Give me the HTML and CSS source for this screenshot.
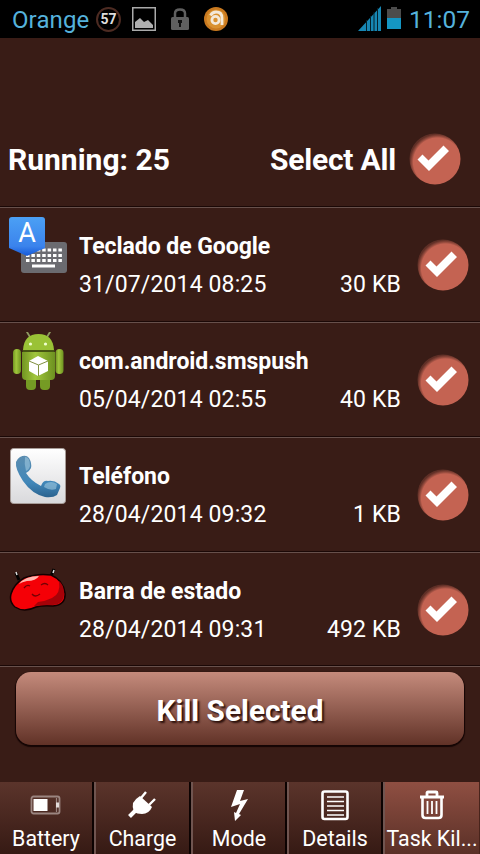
FILE: index.html
```html
<!DOCTYPE html>
<html lang="es">
<head>
    <meta charset="UTF-8">
    <meta name="viewport" content="width=device-width, initial-scale=1.0">
    <title>Task Killer</title>
    <link rel="stylesheet" href="styles.css">
</head>
<body>
    <svg width="0" height="0" class="defs">
        <defs>
            <radialGradient id="disc" cx="0.55" cy="0.56" r="0.55">
                <stop offset="0.86" stop-color="#c46352"/>
                <stop offset="1" stop-color="#a65243" stop-opacity="0.35"/>
            </radialGradient>
            <symbol id="check" viewBox="0 0 52 52">
                <circle cx="26" cy="26" r="25.5" fill="url(#disc)"/>
                <path d="M8.500 26.500l5-5 6 6L34.500 12.500l5.500 5.500L20 38z" fill="#fff"/>
            </symbol>
        </defs>
    </svg>

    <div class="status">
        <span class="carrier">Orange</span>
        <span class="badge">57</span>
        <svg class="picture" width="24" height="24" viewBox="0 0 24 24">
            <rect x="0.750" y="0.750" width="22.500" height="22.500" fill="none" stroke="#aaa" stroke-width="1.500"/>
            <path d="M3 21v-6l5-4 4 4 4-2 5 5v3z" fill="#b0b0b0"/>
        </svg>
        <svg class="lock" width="18" height="23" viewBox="0 0 18 23">
            <path d="M4 12V5.500Q4 1.500 9 1.500t5 4V12" fill="none" stroke="#606060" stroke-width="2.500"/>
            <rect x="0" y="9" width="18" height="13" rx="1.500" fill="#606060"/>
            <path d="M7 12h4v3h-1v4H8v-4H7z" fill="#111"/>
        </svg>
        <svg class="avast" width="24" height="24" viewBox="0 0 24 24">
            <circle cx="12" cy="12" r="12" fill="#c9791f"/>
            <circle cx="12" cy="12" r="9.500" fill="#d99130"/>
            <path d="M6.500 8.500q2-3.500 5.500-3.500 6 0 6 6v7" fill="none" stroke="#f3e9da" stroke-width="2.800"/>
            <circle cx="11.500" cy="13" r="3.600" fill="none" stroke="#f3e9da" stroke-width="2.800"/>
        </svg>
        <svg class="signal" width="23" height="25" viewBox="0 0 23 25">
            <path d="M0 25L23 0v25z" fill="#1787b4"/>
            <path d="M8.500 14v11M12.500 10v15M16 6v19M19.500 2v23" stroke="#05202b" stroke-width="1"/>
        </svg>
        <svg class="cell" width="14" height="22" viewBox="0 0 14 22">
            <path d="M0 2h4V0h6v2h4v9H0z" fill="#4c4c4c"/>
            <path d="M0 11h14v11H0z" fill="#1496c4"/>
        </svg>
        <span class="clock">11:07</span>
    </div>

    <div class="header">
        <span class="running">Running: 25</span>
        <span class="select-all">Select All</span>
        <svg class="check"><use href="#check"/></svg>
    </div>

    <div class="list">
        <div class="row">
            <svg class="app" viewBox="0 0 58 58">
                <defs>
                    <linearGradient id="blue" x2="0" y2="1">
                        <stop offset="0" stop-color="#4ba0f5"/>
                        <stop offset="0.75" stop-color="#3b83ec"/>
                        <stop offset="1" stop-color="#1558d8"/>
                    </linearGradient>
                </defs>
                <rect x="12" y="25" width="46" height="31" rx="3" fill="#6b6b70"/>
                <path d="M17 33h37M17 38.500h37M17 43.500h37" stroke="#fff" stroke-width="3.200" stroke-dasharray="3.500 1.900"/>
                <path d="M23 49h23" stroke="#fff" stroke-width="3"/>
                <path d="M0 3q0-3 3-3h30q3 0 3 3v28L18 39 0 31z" fill="url(#blue)"/>
                <text x="18" y="25" text-anchor="middle" class="letter">A</text>
            </svg>
            <div class="info">
                <div class="name">Teclado de Google</div>
                <div class="meta"><span>31/07/2014 08:25</span><span>30 KB</span></div>
            </div>
            <svg class="check"><use href="#check"/></svg>
        </div>
        <div class="row">
            <svg class="app" viewBox="0 0 58 58">
                <defs>
                    <linearGradient id="green">
                        <stop offset="0" stop-color="#719522"/>
                        <stop offset="0.4" stop-color="#a1c63c"/>
                        <stop offset="1" stop-color="#6d9120"/>
                    </linearGradient>
                </defs>
                <path d="M21 5L18 0M38 5l3-5" stroke="#8f9a62" stroke-width="1.800" stroke-linecap="round"/>
                <rect x="17" y="43" width="10" height="15" rx="4" fill="#759b24"/>
                <rect x="31" y="43" width="10" height="15" rx="4" fill="#759b24"/>
                <rect x="4" y="17" width="8" height="25" rx="4" fill="url(#green)"/>
                <rect x="46.500" y="17" width="8" height="25" rx="4" fill="url(#green)"/>
                <path d="M14 18Q15 2 29.500 2T45 18z" fill="#9ac236"/>
                <path d="M13 20h33v24q0 4-4 4H17q-4 0-4-4z" fill="url(#green)"/>
                <path d="M13.500 19h32" stroke="#4c6913" stroke-width="1.500"/>
                <circle cx="21.500" cy="12" r="1.600" fill="#efffd0"/>
                <circle cx="36.500" cy="12" r="1.600" fill="#efffd0"/>
                <path d="M20 29l9-5 10 5v10l-10 5-9-5z" fill="#fff"/>
                <path d="M20 29l9.500 4L39 29M29.500 33v11" fill="none" stroke="#81903f" stroke-width="1"/>
            </svg>
            <div class="info">
                <div class="name">com.android.smspush</div>
                <div class="meta"><span>05/04/2014 02:55</span><span>40 KB</span></div>
            </div>
            <svg class="check"><use href="#check"/></svg>
        </div>
        <div class="row">
            <svg class="app" viewBox="0 0 58 58">
                <defs>
                    <linearGradient id="paper" x2="0" y2="1">
                        <stop offset="0" stop-color="#fff"/>
                        <stop offset="1" stop-color="#d9d9dc"/>
                    </linearGradient>
                    <linearGradient id="phone" x2="0" y2="1">
                        <stop offset="0" stop-color="#5b8db0"/>
                        <stop offset="0.65" stop-color="#4187b9"/>
                        <stop offset="1" stop-color="#2b638f"/>
                    </linearGradient>
                </defs>
                <rect x="1.500" y="1.500" width="55" height="55" rx="3" fill="url(#paper)" stroke="#a79c98"/>
                <path d="M11 10q6-3 9 1 3 5 2 10-2 4-5 5 5 8 15 13 2-6 7-5 6-1 11 3 2 1 1 4l-3 7q-4 3-12 2Q23 47 14 34 6 22 7 15q1-3 4-5z" fill="url(#phone)"/>
                <path d="M16 10q5 0 5 9-1 4-4 5-2-7-1-14zM36 37q6-4 12 0l-1 5q-6 2-12-2z" fill="#9fc8df" opacity="0.600"/>
            </svg>
            <div class="info">
                <div class="name">Teléfono</div>
                <div class="meta"><span>28/04/2014 09:32</span><span>1 KB</span></div>
            </div>
            <svg class="check"><use href="#check"/></svg>
        </div>
        <div class="row">
            <svg class="app" viewBox="0 -4 58 58">
                <path d="M10 14L7 7M42 10l3-7" stroke="#000" stroke-width="3"/>
                <path d="M8 9l-1-3M44 7l1-3" stroke="#ddd" stroke-width="1.500"/>
                <path d="M15 12Q28 7 42 9q12 5 14 18 1 12-12 13-10-1-17 1-12 6-21 0-6-5-4-13 3-10 13-16z" fill="#f50006" stroke="#120000" stroke-width="1.500"/>
                <path d="M50 15q2 13-7 17-6 3-14 4l-4 4q9-1 19-1 11-1 11-12 0-8-5-12z" fill="#a50208"/>
                <path d="M10 18q6-8 20-8-3 5-12 5-5 1-8 3z" fill="#ffb7b0"/>
                <path d="M15 22q3-4 6-2M32 19q4-3 7 0M23 28q3 4 8 0" fill="none" stroke="#740004" stroke-width="1.300"/>
            </svg>
            <div class="info">
                <div class="name">Barra de estado</div>
                <div class="meta"><span>28/04/2014 09:31</span><span>492 KB</span></div>
            </div>
            <svg class="check"><use href="#check"/></svg>
        </div>
    </div>

    <button class="kill">Kill Selected</button>

    <div class="tabs">
        <div class="tab">
            <svg width="32" height="32" viewBox="0 0 32 32">
                <rect x="1.500" y="7.500" width="28" height="17" rx="2" fill="none" stroke="#9b8580" stroke-width="1.800"/>
                <rect x="3.500" y="10" width="14" height="12" fill="#fff"/>
                <path d="M26.500 9v14" stroke="#9b8580" stroke-width="1.200"/>
                <rect x="26" y="13.500" width="3" height="5" fill="#e4dcda"/>
            </svg>
            <span class="label">Battery</span>
        </div>
        <div class="tab">
            <svg width="32" height="32" viewBox="0 0 32 32">
                <path d="M2.500 27.500L10 20" stroke="#fff" stroke-width="4"/>
                <path d="M14 9l5-6M22 16l6-6" stroke="#fff" stroke-width="2.400"/>
                <path d="M13 7l12 11q-3 7-10 7-5 0-8-2-2-5-1-9 2-4 7-7z" fill="#fff"/>
            </svg>
            <span class="label">Charge</span>
        </div>
        <div class="tab">
            <svg width="32" height="32" viewBox="0 0 32 32">
                <path d="M14 1h7l-4 11 8-2-9 15 2 1-6 6-1-9 2 1 4-9-9 3z" fill="#fff"/>
            </svg>
            <span class="label">Mode</span>
        </div>
        <div class="tab">
            <svg width="32" height="32" viewBox="0 0 32 32">
                <rect x="3.500" y="2.500" width="25" height="27.500" rx="2" fill="none" stroke="#fff" stroke-width="2.600"/>
                <path d="M8 8h17M8 12.500h17M8 17h17M8 21.500h17M8 26h17" stroke="#fff" stroke-width="1.500"/>
            </svg>
            <span class="label">Details</span>
        </div>
        <div class="tab active">
            <svg width="32" height="32" viewBox="0 0 32 32">
                <path d="M4 8h24M11 6.500V4q0-1 1-1h8q1 0 1 1v2.500" fill="none" stroke="#fff" stroke-width="2.800"/>
                <path d="M6.500 9v17q0 3 3 3h13q3 0 3-3V9" fill="none" stroke="#fff" stroke-width="2.600"/>
                <path d="M11.500 12v13M16 12v13M20.500 12v13" stroke="#fff" stroke-width="1.800"/>
            </svg>
            <span class="label">Task Kil...</span>
        </div>
    </div>
</body>
</html>
```

FILE: styles.css
```css
* {
    box-sizing: border-box;
}
body {
    margin: 0;
    width: 480px;
    height: 854px;
    overflow: hidden;
    display: flex;
    flex-direction: column;
    background-color: #391c16;
    color: #fff;
    font-family: Roboto, "Noto Sans", sans-serif;
}
svg {
    display: block;
    flex: none;
}
.defs {
    position: absolute;
}
.status {
    height: 38px;
    flex: none;
    background-color: #000;
    display: flex;
    align-items: center;
    padding: 0 10px 0 12px;
    color: #55b2dc;
}
.carrier {
    width: 77px;
    padding-top: 2px;
    font-size: 24px;
    letter-spacing: 0.1px;
}
.badge {
    width: 25px;
    height: 25px;
    margin-left: 7px;
    border: 2px solid #4d2b22;
    border-radius: 50%;
    color: #ddd;
    font-size: 14px;
    font-weight: bold;
    line-height: 21px;
    text-align: center;
}
.picture {
    margin-left: 11px;
}
.lock {
    margin-left: 15px;
}
.avast {
    margin-left: 15px;
}
.signal {
    margin-left: auto;
    margin-top: -2px;
}
.cell {
    margin-left: 6px;
    margin-top: -2px;
}
.clock {
    width: 61px;
    margin-left: 8px;
    padding-top: 1px;
    font-size: 24.5px;
    white-space: nowrap;
}
.header {
    height: 170px;
    flex: none;
    display: flex;
    align-items: center;
    padding: 73px 19px 0 8px;
    border-bottom: 1px solid #67504b;
    box-shadow: inset 0 -1px #1b0806;
    font-size: 30px;
    font-weight: bold;
}
.select-all {
    margin-left: auto;
    margin-right: 13px;
    letter-spacing: -0.2px;
}
.check {
    width: 52px;
    height: 52px;
}
.row {
    height: 115px;
    display: flex;
    padding: 9px 11px 0 9px;
    border-bottom: 1px solid #67504b;
    box-shadow: inset 0 -1px #1b0806;
}
.row:last-child {
    height: 114px;
}
.app {
    width: 58px;
    height: 58px;
}
.letter {
    fill: #fff;
    font-size: 27px;
}
.info {
    flex: 1;
    padding: 11px 16px 0 12px;
}
.name {
    font-size: 23px;
    font-weight: bold;
    line-height: 38px;
    letter-spacing: -0.05px;
}
.meta {
    display: flex;
    justify-content: space-between;
    font-size: 23px;
    line-height: 38px;
    letter-spacing: 0.13px;
}
.row .check {
    margin-top: 22px;
}
.kill {
    width: 448px;
    height: 73px;
    flex: none;
    margin: 5px 16px 0;
    padding: 3px 0 0;
    border: none;
    border-radius: 15px;
    background: linear-gradient(#c58b7c, #613227);
    box-shadow: 0 1px 1px 1px #150504;
    color: #fff;
    font-family: inherit;
    font-size: 29.8px;
    font-weight: bold;
    text-shadow: 2px 2px 2px #2a100b;
}
.tabs {
    height: 72px;
    margin-top: auto;
    display: grid;
    grid-template-columns: 94px 97px 96px 96px 97px;
}
.tab {
    display: flex;
    flex-direction: column;
    align-items: center;
    padding-top: 7px;
    border-left: 2px solid #705550;
    border-right: 2px solid #0c0201;
    background: linear-gradient(#5b342b, #361a14);
    overflow: hidden;
}
.tab:first-child {
    border-left: none;
}
.tab.active {
    border-right: 1px solid #48231b;
    background: linear-gradient(#8f4f42, #5a3027);
}
.label {
    margin-top: 4px;
    font-size: 21.4px;
    line-height: 27px;
    white-space: nowrap;
}
```
